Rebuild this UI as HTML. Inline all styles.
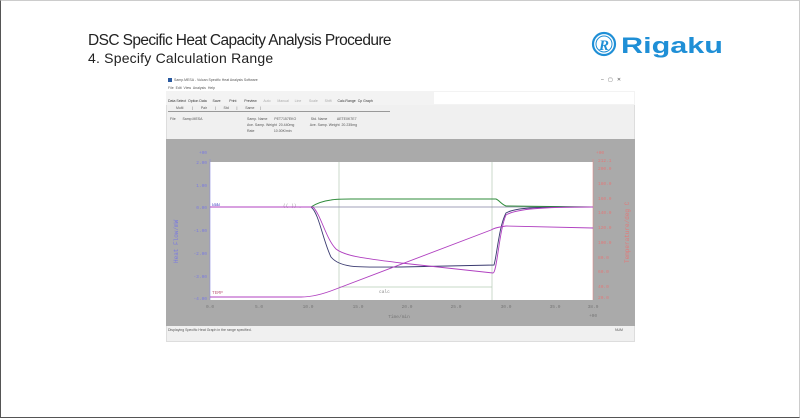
<!DOCTYPE html>
<html><head><meta charset="utf-8"><style>
*{margin:0;padding:0;box-sizing:border-box}
body{width:800px;height:418px;background:#fff;position:relative;overflow:hidden;font-family:"Liberation Sans",sans-serif;border:1px solid #555;border-top-color:#ccc;border-right-color:#ccc}
.t1{position:absolute;left:87px;top:31px;font-size:15.5px;color:#222;letter-spacing:-0.6px}
.t2{position:absolute;left:87px;top:49px;font-size:14px;color:#222;letter-spacing:0.2px}
.s{position:absolute;font-size:3.5px;color:#555;white-space:nowrap}
</style></head><body>
<div class="t1">DSC Specific Heat Capacity Analysis Procedure</div>
<div class="t2">4. Specify Calculation Range</div>
<svg style="position:absolute;left:590px;top:30px" width="140" height="30">
<circle cx="13" cy="13" r="11" fill="none" stroke="#1f8fd6" stroke-width="2.2"/>
<circle cx="13" cy="13" r="8" fill="none" stroke="#1f8fd6" stroke-width="1"/>
<text x="8" y="19" font-size="15" font-weight="bold" font-style="italic" fill="#1f8fd6" font-family="Liberation Serif">R</text>
<text x="30" y="22" font-size="22" font-weight="bold" fill="#1f8fd6" font-family="Liberation Sans" textLength="102" lengthAdjust="spacingAndGlyphs">Rigaku</text>
</svg>
<!-- window -->
<div style="position:absolute;left:165px;top:75px;width:469px;height:266px;background:#f0f0f0;border:1px solid #ddd"></div>
<div style="position:absolute;left:165px;top:75px;width:469px;height:9px;background:#fff"></div>
<div style="position:absolute;left:167px;top:77px;width:4px;height:4px;background:#2a5aa0"></div>
<div class="s" style="left:173px;top:77px">Samp.MESA - Vulcan Specific Heat Analysis Software</div>
<div class="s" style="left:600px;top:76px;font-size:5px">–&nbsp;&nbsp;&nbsp;▢&nbsp;&nbsp;&nbsp;✕</div>
<div style="position:absolute;left:165px;top:84px;width:469px;height:6px;background:#fff"></div>
<div class="s" style="left:167px;top:85px">File&nbsp; Edit&nbsp; View&nbsp; Analysis&nbsp; Help</div>
<div style="position:absolute;left:165px;top:90px;width:469px;height:14px;background:#f3f3f3"></div>
<div style="position:absolute;left:433px;top:91px;width:200px;height:12px;background:#fff"></div>
<div class="s" style="left:167px;top:98px;color:#333">Data Select&nbsp; Option Data&nbsp;&nbsp;&nbsp;&nbsp;&nbsp; Save&nbsp;&nbsp;&nbsp;&nbsp;&nbsp;&nbsp;&nbsp;&nbsp; Print&nbsp;&nbsp;&nbsp;&nbsp;&nbsp;&nbsp;&nbsp; Preview&nbsp;&nbsp;&nbsp;&nbsp;&nbsp;&nbsp; <span style="color:#aaa">Auto&nbsp;&nbsp;&nbsp;&nbsp;&nbsp;&nbsp; Manual&nbsp;&nbsp;&nbsp;&nbsp;&nbsp; Line&nbsp;&nbsp;&nbsp;&nbsp;&nbsp;&nbsp;&nbsp; Scale&nbsp;&nbsp;&nbsp;&nbsp;&nbsp;&nbsp; Shift</span>&nbsp;&nbsp;&nbsp;&nbsp;&nbsp; Calc.Range&nbsp; Cp Graph</div>
<div class="s" style="left:175px;top:105px">Multi&nbsp;&nbsp;&nbsp;&nbsp;&nbsp;&nbsp;&nbsp;&nbsp;&nbsp;|&nbsp;&nbsp;&nbsp;&nbsp;&nbsp;&nbsp;&nbsp; Pair&nbsp;&nbsp;&nbsp;&nbsp;&nbsp;&nbsp;&nbsp;&nbsp;| &nbsp;&nbsp;&nbsp;&nbsp;&nbsp;&nbsp; Std&nbsp;&nbsp;&nbsp;&nbsp;&nbsp;&nbsp;&nbsp; |&nbsp;&nbsp;&nbsp;&nbsp;&nbsp;&nbsp;&nbsp; Same&nbsp;&nbsp;&nbsp;&nbsp;&nbsp; |</div>
<div style="position:absolute;left:167px;top:110px;width:222px;height:1px;background:#999"></div>
<div class="s" style="left:169px;top:116px">File&nbsp;&nbsp;&nbsp;&nbsp;&nbsp;&nbsp; Samp.MESA</div>
<div class="s" style="left:246px;top:116px">Samp. Name&nbsp;&nbsp;&nbsp;&nbsp;&nbsp;&nbsp; PET7157EKO&nbsp;&nbsp;&nbsp;&nbsp;&nbsp;&nbsp;&nbsp;&nbsp;&nbsp;&nbsp;&nbsp;&nbsp;&nbsp;&nbsp; Std. Name&nbsp;&nbsp;&nbsp;&nbsp;&nbsp;&nbsp;&nbsp;&nbsp;&nbsp; AETE0K7E7</div>
<div class="s" style="left:246px;top:122px">Ave. Samp. Weight&nbsp; 20.440mg&nbsp;&nbsp;&nbsp;&nbsp;&nbsp;&nbsp;&nbsp;&nbsp;&nbsp;&nbsp;&nbsp;&nbsp;&nbsp;&nbsp;&nbsp; Ave. Samp. Weight&nbsp; 20.235mg</div>
<div class="s" style="left:246px;top:128px">Rate&nbsp;&nbsp;&nbsp;&nbsp;&nbsp;&nbsp;&nbsp;&nbsp;&nbsp;&nbsp;&nbsp;&nbsp;&nbsp;&nbsp;&nbsp;&nbsp;&nbsp;&nbsp;&nbsp; 10.00K/min</div>
<div style="position:absolute;left:165px;top:138px;width:469px;height:187px;background:#aaaaaa"></div>
<div class="s" style="left:167px;top:327px">Displaying Specific Heat Graph in the range specified.</div>
<div class="s" style="left:614px;top:327px">NUM</div>
<svg style="position:absolute;left:0;top:0" width="800" height="418" font-family="Liberation Mono" font-size="4.5">
<rect x="209" y="161" width="383" height="138" fill="#fff"/>
<line x1="209" y1="158" x2="209" y2="299" stroke="#8a8ae0" stroke-width="0.6"/>
<line x1="592" y1="158" x2="592" y2="299" stroke="#e08a8a" stroke-width="0.6"/>
<g fill="#7a7ae0" text-anchor="end">
<text x="206" y="153">+00</text>
<text x="206" y="163">2.00</text><text x="206" y="186">1.00</text><text x="206" y="208">0.00</text>
<text x="206" y="231">-1.00</text><text x="206" y="254">-2.00</text><text x="206" y="277">-3.00</text><text x="206" y="299">-4.00</text>
</g>
<text transform="translate(177,262) rotate(-90)" fill="#7a7ae0" font-size="6">Heat Flow/mW</text>
<g fill="#e07a7a">
<text x="595" y="153">+00</text>
<text x="597" y="161">212.1</text><text x="597" y="169">200.0</text><text x="597" y="184">180.0</text><text x="597" y="199">160.0</text>
<text x="597" y="213">140.0</text><text x="597" y="228">120.0</text><text x="597" y="243">100.0</text><text x="597" y="258">80.0</text>
<text x="597" y="272">60.0</text><text x="597" y="287">40.0</text><text x="597" y="298">20.0</text>
</g>
<text transform="translate(628,262) rotate(-90)" fill="#e07a7a" font-size="6">Temperature/deg C</text>
<g fill="#777" text-anchor="middle">
<text x="209" y="307">0.0</text><text x="258" y="307">5.0</text><text x="307" y="307">10.0</text><text x="357" y="307">15.0</text>
<text x="406" y="307">20.0</text><text x="455" y="307">25.0</text><text x="505" y="307">30.0</text><text x="554" y="307">35.0</text><text x="592" y="307">38.9</text>
<text x="398" y="317">Time/min</text><text x="592" y="316">+00</text>
</g>
<line x1="338" y1="161" x2="338" y2="299" stroke="#b5cbb5" stroke-width="0.7"/>
<line x1="491" y1="161" x2="491" y2="299" stroke="#b5cbb5" stroke-width="0.7"/>
<line x1="338" y1="286" x2="491" y2="286" stroke="#b5cbb5" stroke-width="0.7"/>
<text x="378" y="292" fill="#888">calc</text>
<text x="211" y="205" fill="#6a6ad0">ЫЫЫ</text>
<text x="211" y="293" fill="#c06080">TEMP</text>
<text x="282" y="206" fill="#999">(( )) ,</text>
<line x1="209" y1="206" x2="592" y2="206" stroke="#8080a0" stroke-width="0.7"/>
<path d="M209 206 L310 206 C316 202 322 200 330 199 C335 198 340 198 350 198 L495 198 C498 199 500 203 505 205 L592 206" fill="none" stroke="#2e8b3a" stroke-width="1"/>
<path d="M209 206 L310 206 C318 212 322 240 330 256 C340 268 360 266 400 266 L493 264 C496 254 498 225 505 212 C515 206 540 206 592 206" fill="none" stroke="#3a3a70" stroke-width="0.9"/>
<path d="M209 206 L312 206 C320 214 325 238 335 248 C345 256 370 258 400 262 L492 272 C496 272 498 230 505 214 C515 208 540 206 592 206" fill="none" stroke="#b040c0" stroke-width="0.9"/>
<path d="M209 296 L300 296 C310 296 320 294 335 288 L490 229 C495 226 500 226 505 225 L592 227" fill="none" stroke="#b040c0" stroke-width="0.9"/>
</svg>
</body></html>
